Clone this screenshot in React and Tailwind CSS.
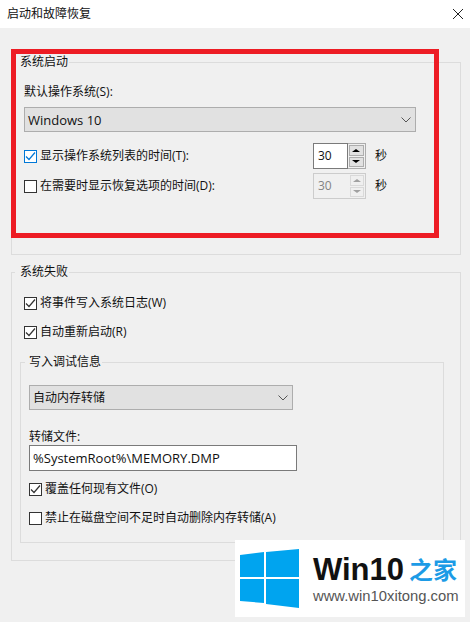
import React from 'react';

const font = "font-['Open_Sans','Noto_Sans_CJK_SC',sans-serif]";

const CheckBox = ({ checked, focus, label }) => (
  <div className="flex h-4 items-center gap-[3px] whitespace-nowrap">
    <span className={`flex h-[13px] w-[13px] items-center justify-center border bg-white ${focus ? 'border-[#0078d7]' : 'border-[#333333]'}`}>
      {checked && (
        <svg width="11" height="11" viewBox="0 0 11 11" fill="none">
          <path d="M1 5.5 L4 8.5 L10 1.5" stroke={focus ? '#0078d7' : '#333333'} strokeWidth="1.2" />
        </svg>
      )}
    </span>
    <span>{label}</span>
  </div>
);

const Chevron = () => (
  <svg width="10" height="6" viewBox="0 0 10 6" fill="none" className="shrink-0">
    <path d="M0.5 0.5 L5 5 L9.5 0.5" stroke="#555555" strokeWidth="1" />
  </svg>
);

const Dropdown = ({ width, children }) => (
  <div className={`flex h-[25px] items-center justify-between border border-[#adadad] bg-[#e1e1e1] pl-[3px] pr-[4px] ${width}`}>
    {children}
    <Chevron />
  </div>
);

const Spinner = ({ disabled }) => (
  <div className={`flex h-[26px] w-[53px] border ${disabled ? 'border-[#cccccc] bg-[#f0f0f0] text-[#838383]' : 'border-[#acacac] bg-[#f0f0f0]'}`}>
    <div className={`flex w-[35px] items-center pl-1 ${disabled ? '' : '-m-px mr-0 border border-[#7a7a7a] bg-white'}`}>30</div>
    <div className="flex flex-1 flex-col gap-px p-px">
      <div className={`flex flex-1 items-center justify-center border ${disabled ? 'border-[#d9d9d9] bg-[#efefef]' : 'border-[#adadad] bg-[#e1e1e1]'}`}>
        <span className={`h-0 w-0 border-x-[4px] border-b-[3px] border-x-transparent ${disabled ? 'border-b-[#a0a0a0]' : 'border-b-black'}`} />
      </div>
      <div className={`flex flex-1 items-center justify-center border ${disabled ? 'border-[#d9d9d9] bg-[#efefef]' : 'border-[#adadad] bg-[#e1e1e1]'}`}>
        <span className={`h-0 w-0 border-x-[4px] border-t-[3px] border-x-transparent ${disabled ? 'border-t-[#a0a0a0]' : 'border-t-black'}`} />
      </div>
    </div>
  </div>
);

const TimeRow = ({ checked, focus, disabled, label }) => (
  <div className="flex w-[363px] items-center justify-between">
    <CheckBox checked={checked} focus={focus} label={label} />
    <div className="flex items-center gap-[9px]">
      <Spinner disabled={disabled} />
      <span>秒</span>
    </div>
  </div>
);

const Group = ({ title, className, legendClass, children }) => (
  <fieldset className={`border border-[#dcdcdc] ${className}`}>
    <legend className={`leading-4 ${legendClass}`}>{title}</legend>
    {children}
  </fieldset>
);

const Logo = () => (
  <div className="absolute left-[235px] top-[540px] flex h-[77px] w-[230px] items-center bg-white pl-[5px]">
    <svg width="60" height="60" viewBox="0 0 60 60" className="shrink-0">
      <polygon points="0,6 24,3 24,28 0,28" fill="#00a4ef" />
      <polygon points="26,3 59,0 59,28 26,28" fill="#00a4ef" />
      <polygon points="0,30 24,30 24,54 0,52" fill="#00a4ef" />
      <polygon points="26,30 59,30 59,59 26,55" fill="#00a4ef" />
    </svg>
    <div className="ml-[13px] flex flex-col">
      <div className="flex h-[32px] items-center">
        <span className="font-['Liberation_Sans',sans-serif] text-[31px] font-bold leading-none text-[#111111]">Win10</span>
        <span className="ml-[5px] font-['Noto_Sans_CJK_SC',sans-serif] text-[24px] font-bold leading-none text-[#1c9be6]">之家</span>
      </div>
      <span className="mt-[3px] font-['Liberation_Sans',sans-serif] text-[14.8px] leading-4 text-[#555555]">www.win10xitong.com</span>
    </div>
  </div>
);

export default function App() {
  return (
    <div className={`relative h-[622px] w-[470px] overflow-hidden bg-[#f0f0f0] text-[12px] leading-4 text-[#111111] ${font}`}>
      <div className="flex h-7 items-center justify-between bg-white pl-[7px] pr-[7px]">
        <span>启动和故障恢复</span>
        <svg width="10" height="10" viewBox="0 0 10 10" fill="none">
          <path d="M0 0 L10 10 M10 0 L0 10" stroke="#222222" strokeWidth="1" />
        </svg>
      </div>

      <div className="flex flex-col gap-[9px] pl-[11px] pr-[9px] pt-[26px]">
        <Group title="系统启动" legendClass="-ml-[9px] pl-[5px] pr-[1px]" className="h-[201px] pl-3 pt-[14px]">
          <div>默认操作系统(S):</div>
          <div className="mt-[7px]">
            <Dropdown width="w-[392px]"><span className="text-[13px]">Windows 10</span></Dropdown>
          </div>
          <div className="mt-[11px] flex flex-col gap-1">
            <TimeRow checked focus label="显示操作系统列表的时间(T):" />
            <TimeRow disabled label="在需要时显示恢复选项的时间(D):" />
          </div>
        </Group>

        <Group title="系统失败" legendClass="-ml-[9px] pl-[5px] pr-[1px]" className="h-[297px] pl-3 pt-[15px]">
          <div className="flex flex-col gap-[13px]">
            <CheckBox checked label="将事件写入系统日志(W)" />
            <CheckBox checked label="自动重新启动(R)" />
          </div>
          <Group title="写入调试信息" legendClass="-ml-1 pl-1 pr-[1px]" className="-ml-1 mt-[14px] h-[189px] w-[424px] pl-2 pt-[15px]">
            <Dropdown width="w-[264px]"><span>自动内存转储</span></Dropdown>
            <div className="mt-[19px]">转储文件:</div>
            <div className="flex h-[26px] w-[268px] items-center border border-[#7a7a7a] bg-white pl-[3px] text-[13px]">%SystemRoot%\MEMORY.DMP</div>
            <div className="mt-[10px] flex flex-col gap-[13px]">
              <CheckBox checked label="覆盖任何现有文件(O)" />
              <CheckBox label="禁止在磁盘空间不足时自动删除内存转储(A)" />
            </div>
          </Group>
        </Group>
      </div>

      <div className="absolute left-[11px] top-[49px] h-[189px] w-[428px] border-[5px] border-[#ed1c24]" />
      <Logo />
    </div>
  );
}
